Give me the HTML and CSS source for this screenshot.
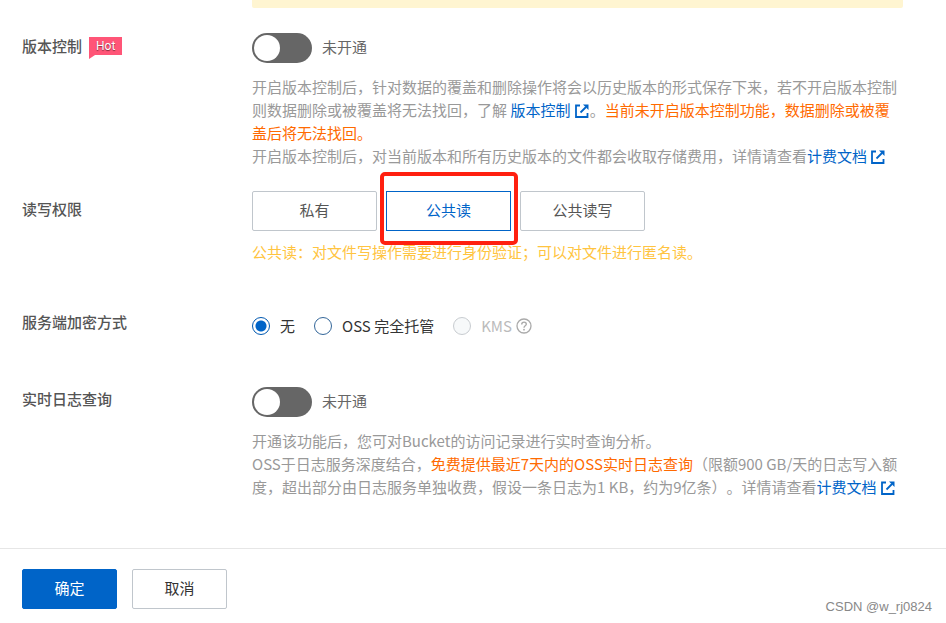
FILE: index.html
```
<!DOCTYPE html>
<html lang="zh-CN">
<head>
    <meta charset="utf-8">
    <title>创建 Bucket</title>
    <link rel="stylesheet" href="styles.css">
</head>
<body>
    <svg class="sprite" aria-hidden="true">
        <symbol id="external" viewBox="0 0 14 14">
            <path d="M5 1.5H1V13H12.5V9" fill="none" stroke="currentColor" stroke-width="1.8"/>
            <path d="M5.5 8.5L11 3" fill="none" stroke="currentColor" stroke-width="1.8"/>
            <path d="M8 0.5H13.5V6Z" fill="currentColor"/>
        </symbol>
    </svg>

    <form class="panel">
        <div class="notice"></div>

        <div class="row">
            <div class="label"><label for="version">版本控制</label><span class="hot">Hot</span></div>
            <div class="field">
                <div class="switch-line">
                    <input type="checkbox" class="switch" id="version">
                    <label for="version">未开通</label>
                </div>
                <div class="help">
                    <p>开启版本控制后，针对数据的覆盖和删除操作将会以历史版本的形式保存下来，若不开启版本控制则数据删除或被覆盖将无法找回，了解 <a href="#">版本控制 <svg class="external"><use href="#external"/></svg></a>。<span class="warn">当前未开启版本控制功能，数据删除或被覆盖后将无法找回。</span></p>
                    <p>开启版本控制后，对当前版本和所有历史版本的文件都会收取存储费用，详情请查看<a href="#">计费文档 <svg class="external"><use href="#external"/></svg></a></p>
                </div>
            </div>
        </div>

        <div class="row row-acl">
            <div class="label">读写权限</div>
            <div class="field">
                <div class="group">
                    <button type="button">私有</button>
                    <div class="marked"><button type="button" class="active">公共读</button></div>
                    <button type="button">公共读写</button>
                </div>
                <p class="hint">公共读：对文件写操作需要进行身份验证；可以对文件进行匿名读。</p>
            </div>
        </div>

        <div class="row row-crypt">
            <div class="label">服务端加密方式</div>
            <div class="field radios">
                <label><input type="radio" name="crypt" checked>无</label>
                <label><input type="radio" name="crypt">OSS 完全托管</label>
                <label class="disabled"><input type="radio" name="crypt" disabled>KMS
                    <svg class="question" viewBox="0 0 16 16">
                        <circle cx="8" cy="8" r="7" fill="none" stroke="currentColor" stroke-width="1.3"/>
                        <path d="M5.7 6.5C5.7 3.4 10.4 3.5 10.3 6.2C10.2 7.9 8 7.8 8 9.8" fill="none" stroke="currentColor" stroke-width="1.4"/>
                        <circle cx="8" cy="11.7" r="0.9" fill="currentColor"/>
                    </svg>
                </label>
            </div>
        </div>

        <div class="row row-log">
            <div class="label"><label for="log">实时日志查询</label></div>
            <div class="field">
                <div class="switch-line">
                    <input type="checkbox" class="switch" id="log">
                    <label for="log">未开通</label>
                </div>
                <div class="help">
                    <p>开通该功能后，您可对Bucket的访问记录进行实时查询分析。</p>
                    <p>OSS于日志服务深度结合，<span class="warn">免费提供最近7天内的OSS实时日志查询</span>（限额900 GB/天的日志写入额度，超出部分由日志服务单独收费，假设一条日志为1 KB，约为9亿条）。详情请查看<a href="#">计费文档 <svg class="external"><use href="#external"/></svg></a></p>
                </div>
            </div>
        </div>
    </form>

    <footer>
        <button type="button" class="ok">确定</button>
        <button type="button" class="cancel">取消</button>
        <span class="credit">CSDN @w_rj0824</span>
    </footer>
</body>
</html>
```

FILE: styles.css
```
*{
    box-sizing: border-box;
}
body{
    margin: 0;
    background-color: #fff;
    color: #555;
    font-family: "Noto Sans CJK SC", sans-serif;
    font-size: 15px;
    line-height: 23px;
    text-spacing-trim: space-all;
}
p{
    margin: 0;
}
a{
    color: #0064c8;
    text-decoration: none;
}
button{
    height: 40px;
    padding: 0 0 4px;
    border: 1px solid #c0c6cc;
    border-radius: 2px;
    background-color: #fff;
    color: #555;
    font: inherit;
}
.sprite{
    display: none;
}
.panel{
    padding: 0 43px 0 22px;
}
.notice{
    height: 8px;
    margin-left: 230px;
    background-color: #fff5d1;
    border-radius: 0 0 2px 2px;
}
.row{
    display: grid;
    grid-template-columns: 230px 1fr;
    margin-top: 25px;
}
.label{
    display: flex;
    align-items: flex-start;
    gap: 7px;
    padding-top: 1px;
    font-weight: 500;
}
.hot{
    height: 22px;
    margin-top: 3px;
    padding: 0 7px;
    background-color: #ff5577;
    clip-path: polygon(0 0, 100% 0, 100% 18px, 6px 18px, 0 100%);
    color: #fff;
    font: 12px/18px Roboto, sans-serif;
    text-shadow: 0 1px 1px rgba(0, 0, 0, 0.5);
}

/* switch */
.switch-line{
    display: flex;
    align-items: center;
    gap: 10px;
    color: #666;
}
.switch-line label{
    padding-bottom: 4px;
}
.switch{
    appearance: none;
    width: 60px;
    height: 30px;
    margin: 0;
    padding: 2px;
    border-radius: 15px;
    background-color: #666;
}
.switch::before{
    content: "";
    display: block;
    width: 26px;
    height: 26px;
    border-radius: 50%;
    background-color: #fff;
}
.help{
    margin-top: 12px;
    color: #999;
}
.warn{
    color: #ff6a00;
}
.external{
    width: 14px;
    height: 14px;
    margin: 0 1px;
    vertical-align: -2px;
}

/* access buttons */
.row-acl{
    margin-top: 24px;
}
.row-acl .label{
    padding-top: 6px;
}
.group{
    display: flex;
    gap: 9px;
}
.group button{
    width: 125px;
}
.group .active{
    border-color: #0064c8;
    border-radius: 0;
    color: #0064c8;
}
.marked{
    position: relative;
}
.marked::after{
    content: "";
    position: absolute;
    inset: -19px -7px -14px -6px;
    border: 4px solid #ff2010;
    border-radius: 5px;
    pointer-events: none;
}
.hint{
    margin-top: 9px;
    color: #ffc440;
}

/* radios */
.row-crypt{
    margin-top: 47px;
}
.row-crypt .label{
    padding-top: 0;
}
.radios{
    display: flex;
    gap: 19px;
    padding-top: 4px;
    color: #333;
}
.radios label{
    display: flex;
    align-items: center;
}
.radios input{
    appearance: none;
    width: 18px;
    height: 18px;
    margin: 0 10px 0 0;
    border: 1px solid #336699;
    border-radius: 50%;
    background-color: #fff;
}
.radios input:checked{
    border-color: #0058b0;
    background: radial-gradient(circle, #0064c8 5px, #fff 6px);
}
.radios input:disabled{
    border-color: #c8ccd0;
    background-color: #f7f9fa;
}
.radios .disabled{
    color: #bbb;
}
.question{
    width: 16px;
    height: 16px;
    margin-left: 4px;
    color: #aaa;
}

.row-log{
    margin-top: 50px;
}
.row-log .label{
    padding-top: 0;
}

footer{
    display: flex;
    gap: 15px;
    margin-top: 50px;
    padding: 20px 14px 5px 22px;
    border-top: 1px solid #e6e6e6;
}
footer button{
    width: 95px;
}
footer .ok{
    border-color: #0064c8;
    background-color: #0064c8;
    color: #fff;
}
footer .cancel{
    color: #333;
}
.credit{
    align-self: flex-end;
    margin: 0 0 -9px auto;
    color: #888;
    font-family: "Liberation Sans", sans-serif;
    font-size: 13px;
}
```
